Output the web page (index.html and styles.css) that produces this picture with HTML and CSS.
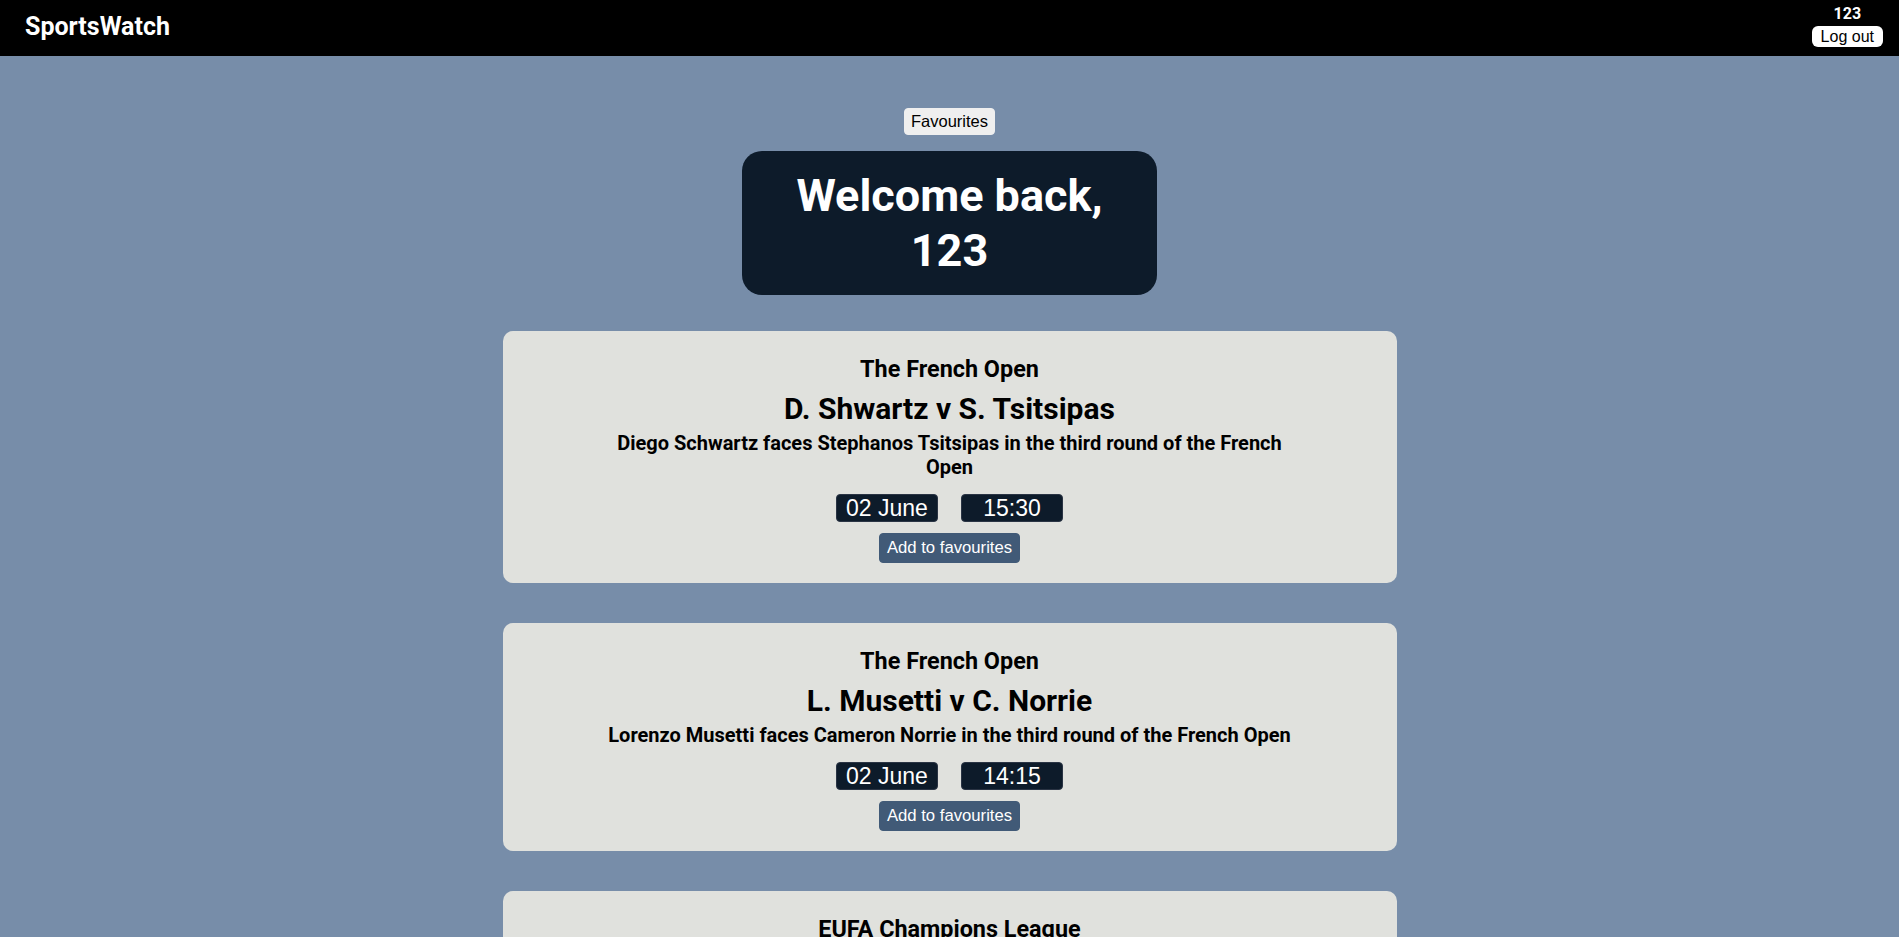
FILE: index.html
```html
<!DOCTYPE html>
<html lang="en">
<head>
<meta charset="utf-8">
<title>SportsWatch</title>
<link rel="stylesheet" href="styles.css">
</head>
<body>
<header class="topbar">
  <div class="brand">SportsWatch</div>
  <div class="user">
    <div class="user-name">123</div>
    <button class="logout">Log out</button>
  </div>
</header>
<main class="content">
  <button class="fav-link">Favourites</button>
  <div class="welcome">
    <h1 class="welcome-title">Welcome back, 123</h1>
  </div>

  <section class="card">
    <h3 class="league">The French Open</h3>
    <h2 class="match">D. Shwartz v S. Tsitsipas</h2>
    <p class="desc">Diego Schwartz faces Stephanos Tsitsipas in the third round of the French Open</p>
    <div class="times">
      <span class="pill">02 June</span>
      <span class="pill">15:30</span>
    </div>
    <button class="add-fav">Add to favourites</button>
  </section>

  <section class="card">
    <h3 class="league">The French Open</h3>
    <h2 class="match">L. Musetti v C. Norrie</h2>
    <p class="desc">Lorenzo Musetti faces Cameron Norrie in the third round of the French Open</p>
    <div class="times">
      <span class="pill">02 June</span>
      <span class="pill">14:15</span>
    </div>
    <button class="add-fav">Add to favourites</button>
  </section>

  <section class="card">
    <h3 class="league">EUFA Champions League</h3>
    <h2 class="match">Real Madrid v Liverpool</h2>
    <p class="desc">Real Madrid face Liverpool in the final of the Champions League</p>
    <div class="times">
      <span class="pill">28 May</span>
      <span class="pill">20:00</span>
    </div>
    <button class="add-fav">Add to favourites</button>
  </section>
</main>
</body>
</html>
```

FILE: styles.css
```css
html, body {
  margin: 0;
  padding: 0;
}

body {
  background: #778da9;
  font-family: Roboto, "Liberation Sans", Arial, sans-serif;
  color: #000;
}

.topbar {
  height: 56px;
  box-sizing: border-box;
  background: #000;
  display: flex;
  justify-content: space-between;
  align-items: flex-start;
  padding: 0 16px 0 25px;
}

.brand {
  align-self: center;
  color: #fff;
  font-weight: 700;
  font-size: 25px;
  line-height: 29px;
  margin-bottom: 3px;
}

.user {
  display: flex;
  flex-direction: column;
  align-items: center;
  padding-top: 5px;
}

.user-name {
  color: #fff;
  font-weight: 700;
  font-size: 16px;
  line-height: 17px;
  margin-bottom: 4px;
}

.logout {
  font-family: "Liberation Sans", Arial, sans-serif;
  font-size: 16px;
  line-height: 19px;
  background: #fff;
  color: #000;
  border: none;
  border-radius: 6px;
  padding: 1px 9px;
  cursor: pointer;
}

.content {
  display: flex;
  flex-direction: column;
  align-items: center;
  padding: 52px 0 40px;
}

.fav-link {
  font-family: "Liberation Sans", Arial, sans-serif;
  font-size: 16.5px;
  line-height: 19px;
  background: #efefef;
  color: #000;
  border: 1px solid #efefef;
  border-radius: 4px;
  padding: 3px 6px;
  cursor: pointer;
}

.welcome {
  margin-top: 16px;
  width: 415px;
  box-sizing: border-box;
  padding: 17px 40px;
  background: #0d1b2a;
  border-radius: 20px;
  text-align: center;
}

.welcome-title {
  margin: 0;
  color: #fff;
  font-size: 45px;
  line-height: 55px;
  font-weight: 700;
}

.card {
  margin-top: 36px;
  width: 894px;
  box-sizing: border-box;
  padding: 24px 20px 20px;
  background: #e0e1dd;
  border-radius: 10px;
  display: flex;
  flex-direction: column;
  align-items: center;
  text-align: center;
}

.card + .card {
  margin-top: 40px;
}

.league {
  margin: 0;
  font-size: 23.4px;
  line-height: 28px;
  font-weight: 700;
}

.match {
  margin: 8px 0 0;
  font-size: 30px;
  line-height: 35px;
  font-weight: 700;
}

.desc {
  margin: 5px 0 0;
  max-width: 700px;
  font-size: 20px;
  line-height: 24px;
  font-weight: 700;
}

.times {
  margin-top: 15px;
  display: flex;
  gap: 23px;
}

.pill {
  width: 100px;
  border: 1px solid #2a3444;
  border-radius: 4px;
  background: #0d1b2a;
  color: #fff;
  font-family: "Liberation Sans", Arial, sans-serif;
  font-size: 23px;
  line-height: 26px;
  text-align: center;
}

.add-fav {
  margin-top: 11px;
  font-family: "Liberation Sans", Arial, sans-serif;
  font-size: 16.7px;
  line-height: 18px;
  background: #415a77;
  color: #fff;
  border: 1px solid #415a77;
  border-radius: 4px;
  padding: 5px 7px;
  cursor: pointer;
}
```
